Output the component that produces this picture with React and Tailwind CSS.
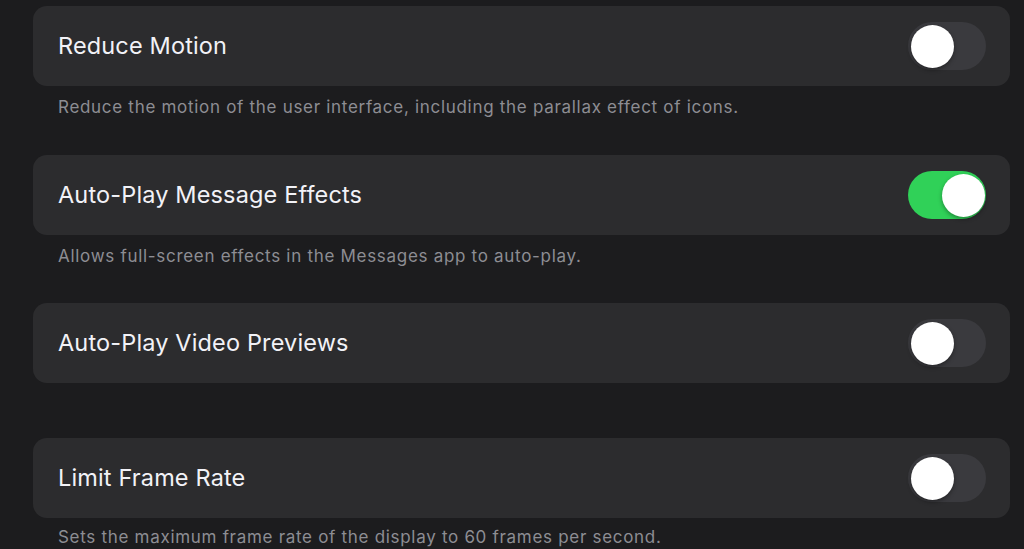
import React, { useState } from 'react'

const Toggle = ({ on, onChange }) => {
  return (
    <button
      onClick={onChange}
      className={`relative w-[78px] h-[48px] rounded-full shrink-0 transition ${on ? 'bg-[#30d158]' : 'bg-[#3a3a3e]'}`}
    >
      <span
        className={`absolute top-[2.5px] w-[43px] h-[43px] rounded-full bg-white shadow-[0_2px_4px_rgba(0,0,0,0.35)] transition-all ${on ? 'left-[34px]' : 'left-[2.5px]'}`}
      />
    </button>
  )
}

const Row = ({ title, on, onChange }) => (
  <div className="h-[80px] bg-[#2c2c2e] rounded-[14px] flex items-center justify-between pl-[25px] pr-[24px]">
    <span className="text-[23.5px] text-[#f2f2f7] tracking-[0.15px]">{title}</span>
    <Toggle on={on} onChange={onChange} />
  </div>
)

const Note = ({ children, h = 'h-[69px]', pt = 'pt-[11px]' }) => (
  <div className={`${h} ${pt} pl-[25px] text-[17px] leading-[20px] text-[#8d8d93] tracking-[0.7px] whitespace-nowrap`}>
    {children}
  </div>
)

export default function App() {
  const [reduce, setreduce] = useState(false)
  const [effects, seteffects] = useState(true)
  const [video, setvideo] = useState(false)
  const [frame, setframe] = useState(false)

  return (
    <div
      className="w-[1024px] h-[549px] bg-[#1c1c1e] overflow-hidden pt-[6px] pl-[33px] pr-[14px]"
      style={{ fontFamily: 'Inter, "Noto Sans", sans-serif' }}
    >
      <Row title="Reduce Motion" on={reduce} onChange={() => setreduce(!reduce)} />
      <Note>Reduce the motion of the user interface, including the parallax effect of icons.</Note>

      <Row title="Auto-Play Message Effects" on={effects} onChange={() => seteffects(!effects)} />
      <Note h="h-[68px]">Allows full-screen effects in the Messages app to auto-play.</Note>

      <Row title="Auto-Play Video Previews" on={video} onChange={() => setvideo(!video)} />
      <div className="h-[55px]"></div>

      <Row title="Limit Frame Rate" on={frame} onChange={() => setframe(!frame)} />
      <Note pt="pt-[9px]">Sets the maximum frame rate of the display to 60 frames per second.</Note>
    </div>
  )
}
